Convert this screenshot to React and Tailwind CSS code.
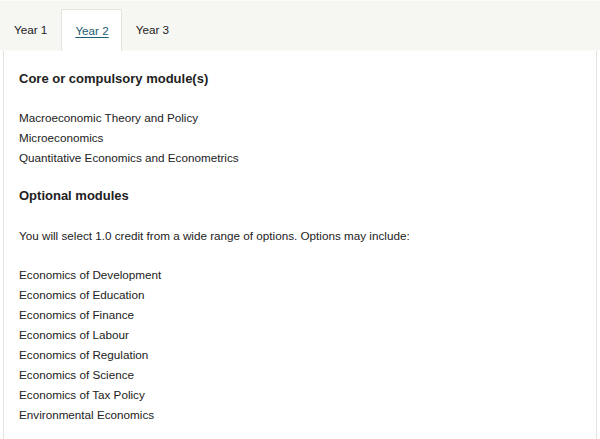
import React from 'react';

const tabs = ['Year 1', 'Year 2', 'Year 3'];

const core = [
  'Macroeconomic Theory and Policy',
  'Microeconomics',
  'Quantitative Economics and Econometrics',
];

const optional = [
  'Economics of Development',
  'Economics of Education',
  'Economics of Finance',
  'Economics of Labour',
  'Economics of Regulation',
  'Economics of Science',
  'Economics of Tax Policy',
  'Environmental Economics',
];

export default function App() {
  const active = 'Year 2';

  return (
    <div className="w-[600px] h-[439px] overflow-hidden bg-white px-[3px] text-[#222] font-['Liberation_Sans',Arial,sans-serif]">
      {/* Tab strip */}
      <div className="flex items-end h-[51px] bg-[#f6f6f2] border-t border-[#fbfbf9] border-b border-[#e4e4df] -mx-[3px] px-[3px]">
        {tabs.map((t, i) =>
          t === active ? (
            <button
              key={t}
              className="h-[42px] -mb-px pl-[13px] pr-[12px] bg-white border border-b-0 border-[#e4e4df] text-[11.7px] text-[#1d5e72] underline underline-offset-2"
            >
              {t}
            </button>
          ) : (
            <button
              key={t}
              className={i === 0 ? 'h-[41px] pl-[11px] pr-[14px] text-[11.7px] text-[#222]' : 'h-[41px] px-[14px] text-[11.7px] text-[#222]'}
            >
              {t}
            </button>
          )
        )}
      </div>

      {/* Panel */}
      <div className="h-[400px] border-x border-[#e4e4df] px-[15px] pt-[18px] text-[11.7px] leading-[20px]">
        <h3 className="text-[13px] font-bold leading-[20px]">Core or compulsory module(s)</h3>
        <ul className="mt-[19px]">
          {core.map(m => (
            <li key={m}>{m}</li>
          ))}
        </ul>

        <h3 className="mt-[18px] text-[13px] font-bold leading-[20px]">Optional modules</h3>
        <p className="mt-[20px]">You will select 1.0 credit from a wide range of options. Options may include:</p>
        <ul className="mt-[19px]">
          {optional.map(m => (
            <li key={m}>{m}</li>
          ))}
        </ul>
      </div>
    </div>
  );
}
